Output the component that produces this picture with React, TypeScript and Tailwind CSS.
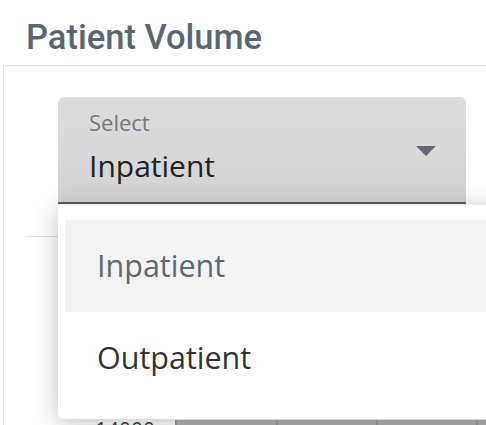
import React from "react";

const options = ["Inpatient", "Outpatient"];

const ChevronDown = () => (
  <svg className="w-[20px] h-[10px]" viewBox="0 0 20 10" fill="#5f6b74">
    <path d="M0 0h20L10 10z" />
  </svg>
);

const App: React.FC = () => {
  const selected = "Inpatient";

  return (
    <div className="relative w-[486px] h-[425px] overflow-hidden bg-white">
      {/* header */}
      <div className="h-[65px] pl-[26px] pt-[17px]">
        <h2 className="font-['Roboto',sans-serif] font-medium text-[34.5px] leading-[40px] text-[#5a6771]">
          Patient Volume
        </h2>
      </div>

      {/* card */}
      <div className="ml-[3px] h-[360px] border-l border-t border-[#e2e2e2] font-['Open_Sans',sans-serif]">
        <div className="pt-[31px] pl-[54px]">
          <div className="w-[408px] h-[107px] rounded-t-[6px] bg-gradient-to-b from-[#dcdcdc] via-[#d9d9d9] to-[#d1d1d1] border-b-[2px] border-[#556169] flex items-start justify-between pl-[31px] pr-[30px]">
            <div className="flex flex-col pt-[10px]">
              <span className="text-[22px] leading-[30px] text-[#6f7a83]">Select</span>
              <span className="text-[30px] leading-[58px] text-[#222]">{selected}</span>
            </div>
            <div className="pt-[49px]">
              <ChevronDown />
            </div>
          </div>
        </div>

        {/* chart behind the menu */}
        <div className="mt-[32px] ml-[23px] border-t border-[#d8e0ea] h-[184px]" />
        <div className="flex h-[10px]">
          <div className="w-[171px] pl-[91px] text-[21px] leading-[20px] text-[#444]">14000</div>
          <div className="w-[101px] bg-[#b3b3b3] border-l-[2px] border-[#9d9d9d]" />
          <div className="w-[100px] bg-[#b3b3b3] border-l-[2px] border-[#9d9d9d]" />
          <div className="w-[100px] bg-[#b3b3b3] border-l-[2px] border-[#9d9d9d]" />
          <div className="flex-1 bg-[#b3b3b3] border-l-[2px] border-[#9d9d9d]" />
        </div>
      </div>

      {/* open dropdown menu */}
      <ul className="absolute top-[205px] left-[58px] w-[450px] h-[214px] bg-white rounded-bl-[6px] shadow-[0_4px_24px_rgba(0,0,0,0.25)] pt-[15px] pl-[7px] font-['Open_Sans',sans-serif]">
        {options.map((opt) => (
          <li
            key={opt}
            className={`h-[92px] flex items-center pl-[32px] text-[30.5px] ${
              opt === selected ? "bg-[#f3f3f3] text-[#5d6a74]" : "text-[#333]"
            }`}
          >
            {opt}
          </li>
        ))}
      </ul>
    </div>
  );
};

export default App;
